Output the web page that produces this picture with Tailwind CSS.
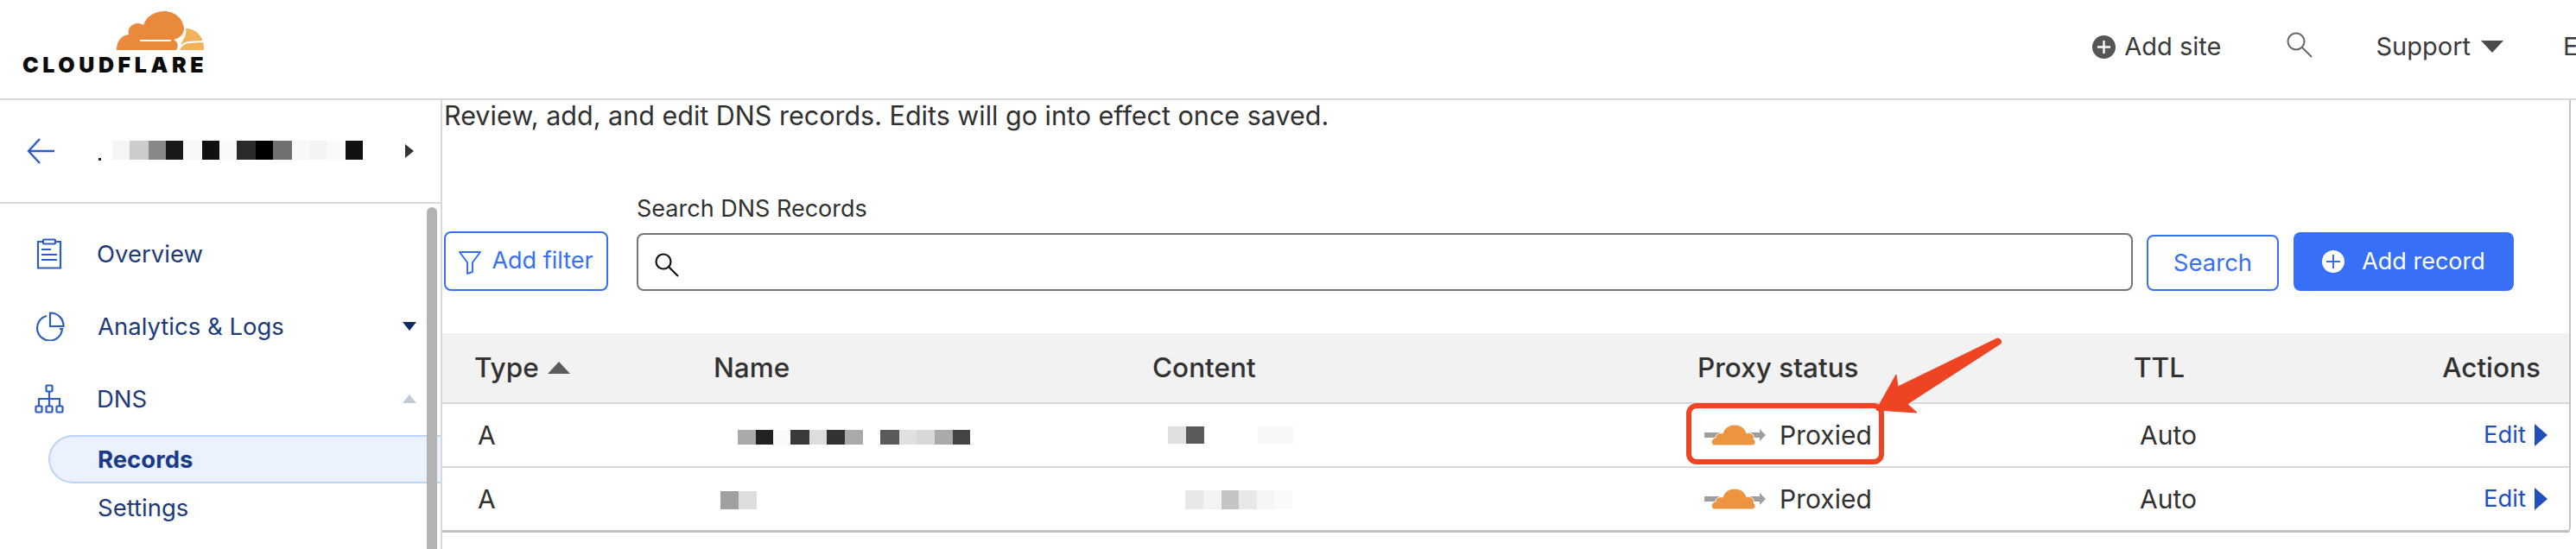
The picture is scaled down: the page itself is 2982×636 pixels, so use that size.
<!DOCTYPE html>
<html lang="en">
<head>
  <meta charset="UTF-8" />
  <title>DNS Records</title>
  <script src="https://cdn.jsdelivr.net/npm/@tailwindcss/browser@4"></script>
</head>
<body class="w-[2982px] h-[636px] overflow-hidden bg-white font-['Inter',sans-serif] text-[#313131]">
  <div class="relative w-[2982px] h-[636px] overflow-hidden">
    <!-- Top bar -->
    <header class="flex items-center h-[116px] border-b-2 border-[#d9d9d9]">
      <div class="relative w-[240px] h-[114px] ml-[26px] shrink-0">
        <svg class="absolute left-[104px] top-[10px]" width="110" height="50" viewBox="0 0 110 50">
          <path fill="#e8893b" d="M5 48C5 38 10 31 19 30C17 24 22 17 30 17C32 17 34 18 36 19C40 8 50 3 60 3C73 3 82 12 83 23C83 29 79 34 71 36C76 38 77 44 74 48Z"/>
          <path fill="#f0b35a" d="M85 23C97 23 106 33 106 45L106 48L77 48C79 43 81 37 84 33C85 30 86 26 85 23Z"/>
          <path fill="none" stroke="#fff" stroke-width="2" d="M32 37L68 37"/>
          <path fill="none" stroke="#fff" stroke-width="2" d="M77 48C79 42 83 40 88 39L106 38"/>
        </svg>
        <span class="absolute left-0 top-[60px] text-[25px] leading-[30px] font-black tracking-[4.6px] text-[#0b0b0b] whitespace-nowrap">CLOUDFLARE</span>
      </div>
      <nav class="flex items-center ml-auto mb-[6px] text-[#3a3a3a] text-[29px] leading-[34px]">
        <svg width="27" height="27" viewBox="0 0 27 27" class="mr-[10px]">
          <circle cx="13.5" cy="13.5" r="13.5" fill="#555"/>
          <path d="M13.5 6V21M6 13.5H21" stroke="#fff" stroke-width="2.4"/>
        </svg>
        <span class="font-normal">Add site</span>
        <svg width="30" height="30" viewBox="0 0 30 30" class="ml-[76px] -mt-[4px]" fill="none" stroke="#666" stroke-width="2">
          <circle cx="11" cy="11" r="9.5"/>
          <path d="M18 18L29 29"/>
        </svg>
        <span class="ml-[73px]">Support</span>
        <span class="ml-[12px] w-0 h-0 border-x-[13px] border-x-transparent border-t-[14px] border-t-[#4a4a4a]"></span>
        <span class="ml-[69px] w-[15px] overflow-hidden">E</span>
      </nav>
    </header>

    <div class="flex h-[520px]">
      <!-- Sidebar -->
      <aside class="relative w-[512px] shrink-0 border-r-2 border-[#d9d9d9] text-[#1d3a7a] text-[27.5px] leading-[34px]">
        <div class="relative flex items-center h-[120px] border-b-2 border-[#d9d9d9]">
          <svg width="32" height="30" viewBox="0 0 32 30" class="ml-[31px]" fill="none" stroke="#2c5cc5" stroke-width="2.4">
            <path d="M32 15H2M15 1L2 15L15 29"/>
          </svg>
          <span class="absolute left-[114px] top-[67px] w-[3px] h-[3px] bg-[#222]"></span>
          <div class="flex h-[22px] ml-[67px] -mt-[2px]">
            <span class="w-[20px] bg-[#f5f5f5]"></span>
            <span class="w-[22px] bg-[#cccccc]"></span>
            <span class="w-[20px] bg-[#888888]"></span>
            <span class="w-[20px] bg-[#181818]"></span>
            <span class="w-[22px] bg-[#f8f8f8]"></span>
            <span class="w-[20px] bg-[#111111]"></span>
            <span class="w-[20px] bg-[#fafafa]"></span>
            <span class="w-[22px] bg-[#2a2a2a]"></span>
            <span class="w-[20px] bg-[#000000]"></span>
            <span class="w-[22px] bg-[#707070]"></span>
            <span class="w-[20px] bg-[#f8f8f8]"></span>
            <span class="w-[20px] bg-[#f4f4f4]"></span>
            <span class="w-[22px] bg-[#fafafa]"></span>
            <span class="w-[20px] bg-[#111111]"></span>
          </div>
          <span class="ml-[49px] w-0 h-0 border-y-[8px] border-y-transparent border-l-[10px] border-l-[#333]"></span>
        </div>

        <ul>
          <li class="flex items-center h-[84px] mt-[16px]">
            <svg width="30" height="36" viewBox="0 0 30 36" class="ml-[42px]" fill="none" stroke="#2c5cc5" stroke-width="2.2">
              <path d="M8 4H2V34.5H28V4H22"/>
              <rect x="8" y="1.5" width="14" height="5" rx="1"/>
              <path d="M6 13H17M6 19H24M6 25H24"/>
            </svg>
            <span class="ml-[40px]">Overview</span>
          </li>
          <li class="flex items-center h-[84px]">
            <svg width="34" height="34" viewBox="0 0 34 34" class="ml-[41px]" fill="none" stroke="#2c5cc5" stroke-width="2.2">
              <path d="M13 5A14.5 14.5 0 1 0 31 20H28"/>
              <path d="M17 1.5A15 15 0 0 1 32.5 17H17Z"/>
            </svg>
            <span class="ml-[38px]">Analytics &amp; Logs</span>
            <span class="ml-auto mr-[28px] w-0 h-0 border-x-[8px] border-x-transparent border-t-[10px] border-t-[#0f2a66]"></span>
          </li>
          <li class="flex items-center h-[84px]">
            <svg width="34" height="34" viewBox="0 0 34 34" class="ml-[40px]" fill="none" stroke="#2c5cc5" stroke-width="2.2">
              <rect x="13.5" y="1.5" width="7" height="7" rx="1"/>
              <rect x="1.5" y="25.5" width="7" height="7" rx="1"/>
              <rect x="13.5" y="25.5" width="7" height="7" rx="1"/>
              <rect x="25.5" y="25.5" width="7" height="7" rx="1"/>
              <path d="M17 8.5V25.5M5 25.5V17H29V25.5"/>
            </svg>
            <span class="ml-[38px]">DNS</span>
            <span class="ml-auto mr-[28px] w-0 h-0 border-x-[8px] border-x-transparent border-b-[10px] border-b-[#c0cad8]"></span>
          </li>
          <li class="flex items-center h-[56px] ml-[56px] mt-[0px] pl-[55px] rounded-l-[28px] border-2 border-r-0 border-[#bcd3f8] bg-[#ebf2fd] font-bold text-[#1a3a8a]">Records</li>
          <li class="flex items-center h-[56px] ml-[113px]">Settings</li>
        </ul>

        <div class="absolute right-[4px] top-[124px] w-[12px] h-[420px] rounded-full bg-[#b3b3b3]"></div>
      </aside>

      <!-- Main content -->
      <main class="w-[2464px] h-[501px] border-r-2 border-[#c4c4c4] rounded-br-[6px]">
        <p class="ml-[2px] h-[32px] pt-[2px] text-[30.5px] leading-[32px] whitespace-nowrap">Review, add, and edit DNS records. Edits will go into effect once saved.</p>

        <div class="flex items-end ml-[2px] mt-[80px]">
          <button class="flex items-center justify-center w-[190px] h-[69px] border-2 border-[#376ff7] rounded-[8px] text-[#376ff7] text-[27px]">
            <svg width="26" height="28" viewBox="0 0 26 28" class="mr-[12px] mt-[2px]" fill="none" stroke="#376ff7" stroke-width="2">
              <path d="M1 2H25L16 14V25L10 27V14Z" stroke-linejoin="round"/>
            </svg>
            Add filter
          </button>
          <div class="ml-[33px] w-[1732px]">
            <label class="block h-[28px] mb-[14px] text-[27px] leading-[28px]">Search DNS Records</label>
            <div class="flex items-center h-[67px] border-2 border-[#757575] rounded-[8px] pl-[19px]">
              <svg width="30" height="28" viewBox="0 0 30 28" class="mt-[6px]" fill="none" stroke="#111" stroke-width="2.2">
                <circle cx="10" cy="10" r="8.5"/>
                <path d="M16 16L27 27"/>
              </svg>
            </div>
          </div>
          <button class="ml-[16px] w-[153px] h-[65px] border-2 border-[#376ff7] rounded-[8px] text-[#376ff7] text-[27.5px]">Search</button>
          <button class="flex items-center justify-center ml-[17px] w-[255px] h-[68px] rounded-[8px] bg-[#376ff7] text-white text-[27px]">
            <svg width="26" height="26" viewBox="0 0 26 26" class="mr-[20px]">
              <circle cx="13" cy="13" r="13" fill="#fff"/>
              <path d="M13 5V21M5 13H21" stroke="#376ff7" stroke-width="2"/>
            </svg>
            Add record
          </button>
        </div>

        <!-- Records table -->
        <div class="mt-[49px] text-[30px]">
          <div class="flex items-center h-[82px] bg-[#f2f2f2] border-b-2 border-[#d9d9d9] text-[31.5px] font-medium">
            <div class="flex items-center w-[314px] pl-[37px]">Type<span class="ml-[10px] w-0 h-0 border-x-[13px] border-x-transparent border-b-[14px] border-b-[#5c5c5c]"></span></div>
            <div class="w-[508px]">Name</div>
            <div class="w-[631px]">Content</div>
            <div class="w-[505px]">Proxy status</div>
            <div class="w-[200px]">TTL</div>
            <div class="flex-1 text-right pr-[33px]">Actions</div>
          </div>

          <div class="flex items-center h-[74px] border-b-2 border-[#d9d9d9]">
            <div class="w-[314px] pl-[41px]">A</div>
            <div class="w-[508px]">
              <div class="flex h-[17px] ml-[28px] mt-[4px]">
                <span class="w-[21px] bg-[#aaaaaa]"></span>
                <span class="w-[20px] bg-[#222222]"></span>
                <span class="w-[20px] bg-[#fafafa]"></span>
                <span class="w-[22px] bg-[#3a3a3a]"></span>
                <span class="w-[20px] bg-[#dddddd]"></span>
                <span class="w-[21px] bg-[#333333]"></span>
                <span class="w-[21px] bg-[#aaaaaa]"></span>
                <span class="w-[20px] bg-white"></span>
                <span class="w-[22px] bg-[#5a5a5a]"></span>
                <span class="w-[20px] bg-[#e0e0e0]"></span>
                <span class="w-[21px] bg-[#d8d8d8]"></span>
                <span class="w-[21px] bg-[#aaaaaa]"></span>
                <span class="w-[20px] bg-[#444444]"></span>
              </div>
            </div>
            <div class="w-[631px]">
              <div class="flex h-[20px] ml-[18px]">
                <span class="w-[21px] bg-[#e0e0e0]"></span>
                <span class="w-[21px] bg-[#5a5a5a]"></span>
                <span class="w-[62px]"></span>
                <span class="w-[41px] bg-[#f8f8f8]"></span>
              </div>
            </div>
            <div class="flex items-center w-[505px] pl-[8px]">
              <svg width="72" height="26" viewBox="0 0 72 26" class="mr-[15px]">
                <path d="M0 10H18V16H0ZM46 10H64V6L71 13L64 20V16H46Z" fill="#9e9e9e"/>
                <path d="M12 25C7 25 7 17 13 16C13 12 17 10 21 11C24 4 29 1 35 1C42 1 47 5 49 11C53 9 59 13 57 18C60 19 60 25 55 25Z" fill="#ec9440" stroke="#fff" stroke-width="1"/>
              </svg>
              <span>Proxied</span>
            </div>
            <div class="w-[200px] pl-[7px]">Auto</div>
            <div class="flex flex-1 items-center justify-end pr-[25px] text-[27.5px] text-[#2250b8]">Edit<span class="ml-[10px] w-0 h-0 border-y-[13px] border-y-transparent border-l-[15px] border-l-[#2250b8]"></span></div>
          </div>

          <div class="flex items-center h-[75px] border-b-[3px] border-[#c0c0c0]">
            <div class="w-[314px] pl-[41px]">A</div>
            <div class="w-[508px]">
              <div class="flex h-[21px] ml-[8px] mt-[2px]">
                <span class="w-[21px] bg-[#a0a0a0]"></span>
                <span class="w-[21px] bg-[#dddddd]"></span>
              </div>
            </div>
            <div class="w-[631px]">
              <div class="flex h-[22px] ml-[38px] mt-[2px]">
                <span class="w-[21px] bg-[#e8e8e8]"></span>
                <span class="w-[21px] bg-[#f3f3f3]"></span>
                <span class="w-[20px] bg-[#c4c4c4]"></span>
                <span class="w-[21px] bg-[#e8e8e8]"></span>
                <span class="w-[20px] bg-[#f5f5f5]"></span>
                <span class="w-[21px] bg-[#fafafa]"></span>
              </div>
            </div>
            <div class="flex items-center w-[505px] pl-[8px]">
              <svg width="72" height="26" viewBox="0 0 72 26" class="mr-[15px]">
                <path d="M0 10H18V16H0ZM46 10H64V6L71 13L64 20V16H46Z" fill="#9e9e9e"/>
                <path d="M12 25C7 25 7 17 13 16C13 12 17 10 21 11C24 4 29 1 35 1C42 1 47 5 49 11C53 9 59 13 57 18C60 19 60 25 55 25Z" fill="#ec9440" stroke="#fff" stroke-width="1"/>
              </svg>
              <span>Proxied</span>
            </div>
            <div class="w-[200px] pl-[7px]">Auto</div>
            <div class="flex flex-1 items-center justify-end pr-[25px] text-[27.5px] text-[#2250b8]">Edit<span class="ml-[10px] w-0 h-0 border-y-[13px] border-y-transparent border-l-[15px] border-l-[#2250b8]"></span></div>
          </div>
        </div>
      </main>
    </div>

    <!-- Red annotation over the first Proxied cell -->
    <div class="absolute left-[1952px] top-[467px] w-[229px] h-[71px] border-[6px] border-[#ee4423] rounded-[12px]"></div>
    <svg class="absolute left-[2160px] top-[385px]" width="170" height="105" viewBox="0 0 170 105">
      <path fill="#ee4423" stroke="#ee4423" stroke-linejoin="round" d="M35 49L12 90L59 93L48 83L156 13C158 10 155 7 152 7L37 63Z"/>
    </svg>
  </div>
</body>
</html>
